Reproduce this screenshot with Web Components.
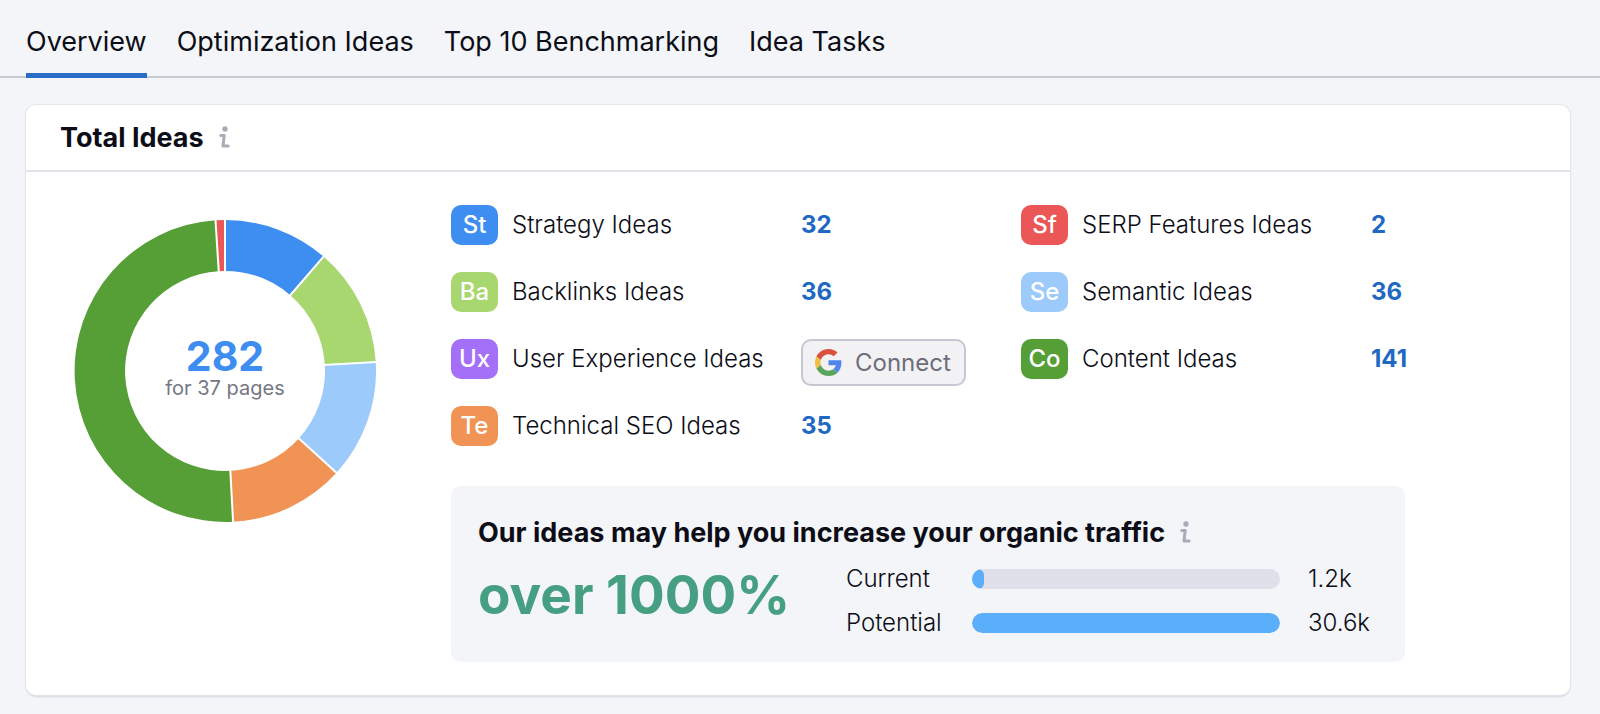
<!DOCTYPE html>
<html lang="en">
<head>
<meta charset="utf-8">
<meta name="viewport" content="width=device-width, initial-scale=1">
<title>Total Ideas</title>
<style>
  body {
    margin: 0;
    background: #f3f5f9;
    color: #0c0d16;
    font-family: Inter, "Liberation Sans", sans-serif;
    font-size: 24px;
    line-height: 32px;
  }
  main { padding: 27px 30px 18px 26px; }
</style>
</head>
<body>
<tab-bar>
  <tab-link href="#overview" current>Overview</tab-link>
  <tab-link href="#optimization">Optimization Ideas</tab-link>
  <tab-link href="#benchmarking">Top 10 Benchmarking</tab-link>
  <tab-link href="#tasks">Idea Tasks</tab-link>
</tab-bar>
<main>
  <idea-card>
    <section-title slot="header">Total Ideas</section-title>
    <donut-chart slot="chart" total="282" caption="for 37 pages"
      segments="32 #3e8df1, 36 #a8d66f, 36 #9ccafb, 35 #f09355, 141 #569f36, 2 #eb5757"></donut-chart>
    <idea-list>
      <idea-item code="St" color="#3e8df1" count="32">Strategy Ideas</idea-item>
      <idea-item code="Ba" color="#a8d66f" count="36">Backlinks Ideas</idea-item>
      <idea-item code="Ux" color="#a370f7">User Experience Ideas<google-button slot="value">Connect</google-button></idea-item>
      <idea-item code="Te" color="#f09355" count="35">Technical SEO Ideas</idea-item>
      <idea-item code="Sf" color="#eb5757" count="2">SERP Features Ideas</idea-item>
      <idea-item code="Se" color="#9ccafb" count="36">Semantic Ideas</idea-item>
      <idea-item code="Co" color="#569f36" count="141">Content Ideas</idea-item>
    </idea-list>
    <traffic-panel>
      <section-title slot="title">Our ideas may help you increase your organic traffic</section-title>
      <span slot="growth">over 1000%</span>
      <traffic-bar label="Current" percent="4" amount="1.2k"></traffic-bar>
      <traffic-bar label="Potential" percent="100" amount="30.6k"></traffic-bar>
    </traffic-panel>
  </idea-card>
</main>
<script>
const define = (name, render) => customElements.define(name, class extends HTMLElement {
  connectedCallback() {
    if (this.shadowRoot) return;
    this.attachShadow({ mode: 'open' }).innerHTML = render(this);
  }
});

define('tab-bar', () => `
  <style>
    :host { display: block; border-bottom: 2px solid #c8cad1; }
    nav { display: flex; flex-wrap: wrap; gap: 0 30px; padding: 0 26px; }
  </style>
  <nav aria-label="Report sections"><slot></slot></nav>`);

define('tab-link', el => `
  <style>
    :host { display: block; margin-bottom: -2px; }
    a {
      display: block; padding: 26px 0 15px; border-bottom: 5px solid transparent;
      color: inherit; text-decoration: none; font-size: 27px; white-space: nowrap;
    }
    :host([current]) a { border-color: #2a6cc8; }
  </style>
  <a href="${el.getAttribute('href')}"${el.hasAttribute('current') ? ' aria-current="page"' : ''}><slot></slot></a>`);

define('section-title', () => `
  <style>
    :host { display: flex; align-items: center; gap: 15px; }
    h2 { margin: 0; font-size: 27px; line-height: 32px; font-weight: 700; }
    svg { flex: none; display: block; }
  </style>
  <h2><slot></slot></h2>
  <svg width="11" height="24" viewBox="0 0 11 24" role="img" aria-label="Info" fill="none" stroke="#a9abb6" stroke-width="3" stroke-linecap="round" stroke-linejoin="round">
    <circle cx="6" cy="3" r="2.7" fill="#a9abb6" stroke="none"/>
    <path d="M1.8 9.4H5.2L4 20H9.2"/>
  </svg>`);

define('idea-card', () => `
  <style>
    :host {
      display: block; background: #fff; border-radius: 10px;
      box-shadow: 0 0 1px 1px #e4e6ec, 0 2px 2px #d3d5db;
    }
    header { padding: 17px 34px 16px; border-bottom: 2px solid #e3e4eb; }
    .body { display: flex; gap: 75px; padding: 33px 34px 33px 48px; }
    .chart { flex: none; padding-top: 15px; }
    .details { flex: 1; min-width: 0; }
  </style>
  <header><slot name="header"></slot></header>
  <div class="body">
    <div class="chart"><slot name="chart"></slot></div>
    <div class="details"><slot></slot></div>
  </div>`);

define('donut-chart', el => {
  const segments = el.getAttribute('segments').split(',').map(s => s.trim().split(' '));
  const total = Number(el.getAttribute('total'));
  // A slice never gets narrower than 1% of the ring, so small counts stay visible.
  const size = v => Math.max(Number(v), total * 0.01);
  const sum = segments.reduce((n, [v]) => n + size(v), 0);
  const outer = 151, inner = 100, c = 151;
  const at = (r, a) => `${(c + r * Math.sin(a)).toFixed(2)} ${(c - r * Math.cos(a)).toFixed(2)}`;
  let angle = 0, slices = '', gaps = '';
  for (const [value, color] of segments) {
    const start = angle, end = angle + size(value) / sum * 2 * Math.PI;
    const large = end - start > Math.PI ? 1 : 0;
    slices += `<path fill="${color}" d="M${at(outer, start)}A${outer} ${outer} 0 ${large} 1 ${at(outer, end)}L${at(inner, end)}A${inner} ${inner} 0 ${large} 0 ${at(inner, start)}Z"/>`;
    gaps += `<path stroke="#fff" stroke-width="2" d="M${at(inner - 1, start)}L${at(outer + 1, start)}"/>`;
    angle = end;
  }
  return `
  <style>
    :host { display: grid; place-items: center; }
    svg, .label { grid-area: 1 / 1; }
    svg { display: block; }
    .label { text-align: center; padding-bottom: 6px; }
    strong { display: block; font-size: 41px; line-height: 40px; color: #3e8df1; }
    span { display: block; font-size: 20px; line-height: 24px; color: #757783; }
  </style>
  <svg width="302" height="302" viewBox="0 0 302 302" aria-hidden="true">${slices}${gaps}</svg>
  <div class="label"><strong>${el.getAttribute('total')}</strong><span>${el.getAttribute('caption')}</span></div>`;
});

define('idea-list', () => `
  <style>
    :host {
      display: grid; grid-auto-flow: column;
      grid-template: repeat(4, 40px) / 570px minmax(0, 1fr);
      row-gap: 27px;
    }
  </style>
  <slot></slot>`);

define('idea-item', el => `
  <style>
    :host { display: grid; grid-template-columns: 47px 275px 1fr; column-gap: 14px; align-items: start; justify-items: start; white-space: nowrap; line-height: 40px; }
    .badge { justify-self: stretch; border-radius: 10px; text-align: center; font-weight: 500; color: #fff; background: ${el.getAttribute('color')}; }
    .name { font-weight: 300; }
    a { font-weight: 700; color: #2168c4; text-decoration: none; }
  </style>
  <span class="badge">${el.getAttribute('code')}</span>
  <span class="name"><slot></slot></span>
  <slot name="value">${el.hasAttribute('count') ? `<a href="#${el.getAttribute('code')}">${el.getAttribute('count')}</a>` : ''}</slot>`);

define('google-button', () => `
  <style>
    :host { display: block; }
    button {
      display: flex; align-items: center; gap: 13px; height: 47px; padding: 0 13px 0 12px;
      border: 2px solid #c6c8d1; border-radius: 10px; background: #f2f2f5;
      color: #6c6e79; font: 400 24px/32px Inter, "Liberation Sans", sans-serif;
    }
    svg { display: block; }
  </style>
  <button type="button">
    <svg width="27" height="27" viewBox="0 0 48 48" aria-hidden="true">
      <path fill="#db4f3f" d="M24 9.5c3.54 0 6.71 1.22 9.21 3.6l6.85-6.85C35.9 2.38 30.47 0 24 0 14.62 0 6.51 5.38 2.56 13.22l7.98 6.19C12.43 13.72 17.74 9.5 24 9.5z"/>
      <path fill="#5086ec" d="M46.98 24.55c0-1.57-.15-3.09-.38-4.55H24v9.02h12.94c-.58 2.96-2.26 5.48-4.78 7.18l7.73 6c4.51-4.18 7.09-10.36 7.09-17.65z"/>
      <path fill="#f2be42" d="M10.53 28.59c-.48-1.45-.76-2.99-.76-4.59s.27-3.14.76-4.59l-7.98-6.19C.92 16.46 0 20.12 0 24c0 3.88.92 7.54 2.56 10.78l7.97-6.19z"/>
      <path fill="#58a55c" d="M24 48c6.48 0 11.93-2.13 15.89-5.81l-7.73-6c-2.15 1.45-4.92 2.3-8.16 2.3-6.26 0-11.57-4.22-13.47-9.91l-7.98 6.19C6.51 42.62 14.62 48 24 48z"/>
    </svg>
    <slot></slot>
  </button>`);

define('traffic-panel', () => `
  <style>
    :host { display: block; max-width: 899px; margin-top: 40px; padding: 31px 28px 23px 27px; border-radius: 10px; background: #f3f5f9; }
    .row { display: flex; gap: 56px; }
    .growth { flex: none; font-size: 53px; line-height: 64px; padding-top: 14px; font-weight: 700; color: #479f82; white-space: nowrap; }
    .bars { flex: 1; min-width: 0; display: grid; gap: 12px; padding-top: 14px; align-content: start; }
  </style>
  <slot name="title"></slot>
  <div class="row">
    <div class="growth"><slot name="growth"></slot></div>
    <div class="bars"><slot></slot></div>
  </div>`);

define('traffic-bar', el => {
  const [label, percent, amount] = ['label', 'percent', 'amount'].map(n => el.getAttribute(n));
  return `
  <style>
    :host { display: grid; grid-template-columns: 98px minmax(0, 1fr) 69px; column-gap: 28px; align-items: center; font-weight: 300; }
    .track { height: 20px; border-radius: 10px; background: #dfe0e9; overflow: hidden; }
    .fill { width: ${percent}%; height: 100%; border-radius: 10px; background: #5aaefa; }
  </style>
  <span id="label">${label}</span>
  <div class="track" role="meter" aria-labelledby="label" aria-valuenow="${percent}" aria-valuetext="${amount}"><div class="fill"></div></div>
  <span>${amount}</span>`;
});
</script>
</body>
</html>
